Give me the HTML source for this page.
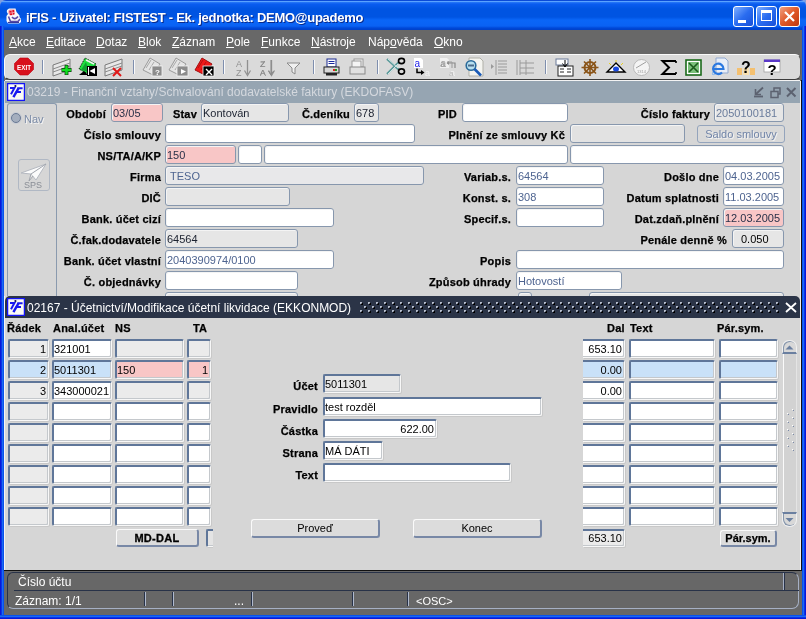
<!DOCTYPE html><html><head><meta charset="utf-8"><style>
*{margin:0;padding:0;box-sizing:border-box}
html,body{width:806px;height:619px;overflow:hidden;background:#7f9ee0}
body{position:relative;font-family:"Liberation Sans",sans-serif}
div{position:absolute}
div,svg{will-change:transform}
.lb{font:bold 11px "Liberation Sans",sans-serif;color:#000;white-space:nowrap;line-height:13px;letter-spacing:0.2px;-webkit-text-stroke:0.25px #000}
.tx{font:11px "Liberation Sans",sans-serif;color:#000;white-space:nowrap;line-height:13px}
.f1{border:1px solid #8797ad;border-radius:3px;font:11px "Liberation Sans",sans-serif;line-height:16px;padding-top:1px;white-space:nowrap;overflow:hidden;box-shadow:inset 1px 1px 0 #f4f4f4}
.f2{border-top:2px solid #5f7699;border-left:2px solid #5f7699;border-right:1px solid #f8f8f8;border-bottom:1px solid #f8f8f8;box-shadow:inset -1px -1px 0 #c4c8cc,1px 1px 0 #c8c8c8;border-radius:2px;font:11px "Liberation Sans",sans-serif;line-height:13px;padding-top:2px;white-space:nowrap;overflow:hidden}
.btn{border-top:1px solid #fafafa;border-left:1px solid #fafafa;border-right:2px solid #7888a6;border-bottom:2px solid #7888a6;border-radius:3px;background:#dcdcdc;font:11px "Liberation Sans",sans-serif;text-align:center;white-space:nowrap}
.menu{font:12px "Liberation Sans",sans-serif;color:#fff;white-space:nowrap;top:35px;line-height:14px}
.menu u{text-decoration:underline}
</style></head><body><div class="" style="left:0px;top:0px;width:806px;height:30px;background:linear-gradient(#0a4ad8 0px,#0a4ad8 1px,#5aa2ff 1px,#5aa2ff 2px,#2a7af8 2px,#0a5cf0 4px,#0054e2 9px,#0054e2 17px,#0a66f8 20px,#0a62f4 26px,#0048d8 28px,#0040c8 30px);border-radius:6px 6px 0 0"></div><svg style="position:absolute;left:0;top:0" width="30" height="30"><path d="M7 10 L9 8.5 H15.5 L16.5 12 L19.5 15.5 V17 L21 19 V22 L19 23.5 H8 L6.5 21 V16 L8 14 L6.8 12 Z" fill="#fafafa"/><path d="M8.5 10.5 L10 9.5 H14.5 L15 12 L13.5 15 L10 15.5 L8.5 13.5Z" fill="#f08a9a"/><path d="M9.5 11 h2 v1.5 h-2z M12.5 10 h1.5 v2 h-1.5z M10 13.5 h2 v1.5 h-2z M13 13 h1.5 v1.5 h-1.5z" fill="#e01020"/><path d="M8.5 16.5 L10.5 21.5 H18 L20 19 M12 17 Q15 20.5 18 16.5" stroke="#5a4aa8" stroke-width="1.6" fill="none"/><path d="M8 22.5 H19" stroke="#3a3a98" stroke-width="1.2"/></svg><div style="left:26px;top:10px;font:bold 13px 'Liberation Sans',sans-serif;letter-spacing:-0.27px;color:#fff;white-space:nowrap;line-height:16px;text-shadow:1px 1px 0 #0a2a8a">iFIS - Uživatel: FISTEST - Ek. jednotka: DEMO@upademo</div><div style="left:733px;top:6px;width:21px;height:21px;border:1px solid #fff;border-radius:3px;background:linear-gradient(135deg,#80b0ff,#2a6cf0 50%,#1850d8)"></div><div style="left:738px;top:20px;width:8px;height:3px;background:#fff"></div><div style="left:756px;top:6px;width:21px;height:21px;border:1px solid #fff;border-radius:3px;background:linear-gradient(135deg,#80b0ff,#2a6cf0 50%,#1850d8)"></div><div style="left:761px;top:10px;width:11px;height:11px;border:1px solid #fff;border-top-width:3px"></div><div style="left:779px;top:6px;width:21px;height:21px;border:1px solid #fff;border-radius:3px;background:linear-gradient(135deg,#f0a080,#e05828 50%,#c03810)"></div><svg style="position:absolute;left:779px;top:6px" width="21" height="21"><path d="M6 6 L15 15 M15 6 L6 15" stroke="#fff" stroke-width="2.2"/></svg><div style="left:0;top:26px;width:4px;height:593px;background:linear-gradient(90deg,#0818d8 0px,#0818d8 1px,#0a34e8 1px,#0a34e8 2px,#1a6af2 2px,#1a6af2 3px,#0a52ec 3px)"></div><div style="left:802px;top:26px;width:4px;height:593px;background:linear-gradient(90deg,#0a52ec 0px,#0a52ec 1px,#1a6af2 1px,#1a6af2 2px,#0a34e8 2px,#0a34e8 3px,#0818d8 3px)"></div><div style="left:0;top:615px;width:806px;height:4px;background:linear-gradient(#0a52ec 0px,#0a52ec 1px,#1a6af2 1px,#1a6af2 2px,#0a34e8 2px,#0a34e8 3px,#0818d8 3px)"></div><div class="" style="left:4px;top:30px;width:798px;height:24px;background:#686868"></div><div class="menu" style="left:9px"><u>A</u>kce</div><div class="menu" style="left:46px"><u>E</u>ditace</div><div class="menu" style="left:96px"><u>D</u>otaz</div><div class="menu" style="left:138px"><u>B</u>lok</div><div class="menu" style="left:172px"><u>Z</u>áznam</div><div class="menu" style="left:226px"><u>P</u>ole</div><div class="menu" style="left:261px"><u>F</u>unkce</div><div class="menu" style="left:311px"><u>N</u>ástroje</div><div class="menu" style="left:368px">Náp<u>o</u>věda</div><div class="menu" style="left:434px"><u>O</u>kno</div><div class="" style="left:4px;top:54px;width:798px;height:27px;background:#686868"></div><div class="" style="left:4px;top:54px;width:797px;height:26px;background:#dadada;border-radius:6px;border-top:1px solid #fafafa;border-left:1px solid #fafafa;border-bottom:1px solid #3c3c3c;border-right:1px solid #5a5a5a"></div><svg style="position:absolute;left:0;top:0" width="806" height="82"><rect x="42" y="60" width="1" height="14" fill="#7f8fae"/><rect x="43" y="60" width="1" height="14" fill="#fafafa"/><rect x="133" y="60" width="1" height="14" fill="#7f8fae"/><rect x="134" y="60" width="1" height="14" fill="#fafafa"/><rect x="223" y="60" width="1" height="14" fill="#7f8fae"/><rect x="224" y="60" width="1" height="14" fill="#fafafa"/><rect x="313" y="60" width="1" height="14" fill="#7f8fae"/><rect x="314" y="60" width="1" height="14" fill="#fafafa"/><rect x="377" y="60" width="1" height="14" fill="#7f8fae"/><rect x="378" y="60" width="1" height="14" fill="#fafafa"/><rect x="545" y="60" width="1" height="14" fill="#7f8fae"/><rect x="546" y="60" width="1" height="14" fill="#fafafa"/><path d="M20 58 H28 L33.5 63.5 V69.5 L28 75 H20 L14.5 69.5 V63.5 Z" fill="#d8101c" stroke="#c00010" stroke-width="0.6"/><text x="24" y="69.6" font-family="Liberation Sans" font-weight="bold" font-size="7" fill="#fff" text-anchor="middle" textLength="14" lengthAdjust="spacingAndGlyphs">EXIT</text><path d="M53 65 L70 59 V70 L53 76 Z" fill="#e8e8e8" stroke="#7a7a7a" stroke-width="1"/><path d="M53 69 L70 63 M53 72 L70 66" stroke="#8a8a8a" stroke-width="1"/><path d="M61.5 70 H71.5 M66.5 65 V75" stroke="#0a3a0a" stroke-width="3.8"/><path d="M62 70 H71 M66.5 65.5 V74.5" stroke="#10e020" stroke-width="2.4"/><path d="M79 69 L85 58 L96 64 L90 75 Z" fill="#20e040" stroke="#0a2a0a" stroke-width="1" stroke-dasharray="1.2 0.8"/><path d="M81 70 L86 62 L89 72Z" fill="#10a030"/><path d="M86 60 L94 64" stroke="#f4f4f4" stroke-width="1.5"/><path d="M79 75 H88 L84 71Z" fill="#000"/><rect x="87" y="66" width="10" height="10" fill="#000"/><rect x="88" y="67" width="1" height="8" fill="#fff"/><path d="M95 68 L89.5 71 L95 74Z" fill="#fff"/><path d="M105 65 L122 59 V70 L105 76 Z" fill="#e8e8e8" stroke="#7a7a7a" stroke-width="1"/><path d="M105 69 L122 63 M105 72 L122 66" stroke="#8a8a8a" stroke-width="1"/><path d="M113 68 L121 76 M121 68 L113 76" stroke="#e01818" stroke-width="2"/><path d="M143 70 L150 58 L160 64 L153 75 Z" fill="#e4e4e4" stroke="#9a9a9a"/><path d="M146 68 L151 60 M149 70 L154 62" stroke="#9a9a9a" stroke-width="0.8"/><rect x="152" y="66" width="10" height="10" fill="#8c8c8c" stroke="#f4f4f4" stroke-width="0.8"/><text x="157.5" y="75" font-family="Liberation Sans" font-weight="bold" font-size="8" fill="#fff" text-anchor="middle">?</text><path d="M169 70 L176 58 L186 64 L179 75 Z" fill="#e4e4e4" stroke="#9a9a9a"/><path d="M172 68 L177 60 M175 70 L180 62" stroke="#9a9a9a" stroke-width="0.8"/><rect x="177" y="66" width="11" height="10" fill="#8c8c8c" stroke="#f4f4f4" stroke-width="0.8"/><path d="M181 69 L186 71.5 L181 74Z" fill="#fff"/><path d="M195 70 L202 58 L212 64 L205 75 Z" fill="#f01818" stroke="#a01010"/><path d="M198 68 L203 60 M201 70 L206 62" stroke="#a01010" stroke-width="0.8"/><rect x="203" y="66" width="11" height="10" fill="#000" stroke="#f4f4f4" stroke-width="0.8"/><path d="M206 69 L212 75 M212 69 L206 75" stroke="#fff" stroke-width="1.4"/><text x="236" y="66.5" font-family="Liberation Sans" font-size="9" fill="#909090">A</text><text x="236" y="75.5" font-family="Liberation Sans" font-size="9" fill="#909090">Z</text><path d="M247.5 60 V74" stroke="#909090" stroke-width="1.3"/><path d="M244.5 70.5 L247.5 75.5 L250.5 70.5" stroke="#909090" fill="none" stroke-width="1.2"/><text x="260" y="66.5" font-family="Liberation Sans" font-size="9" fill="#909090">Z</text><text x="260" y="75.5" font-family="Liberation Sans" font-size="9" fill="#909090">A</text><path d="M271.5 60 V74" stroke="#909090" stroke-width="1.3"/><path d="M268.5 70.5 L271.5 75.5 L274.5 70.5" stroke="#909090" fill="none" stroke-width="1.2"/><text x="260" y="67" font-family="Liberation Sans" font-size="8" fill="#8a8a8a">Z</text><text x="260" y="75" font-family="Liberation Sans" font-size="8" fill="#8a8a8a">A</text><path d="M271 60 V74 M268.5 71 L271 75 L273.5 71" stroke="#8a8a8a" fill="none"/><path d="M287 63 H300 L295 68 V74 L292 72 V68 Z" fill="#f0f0f0" stroke="#8a8a8a"/><rect x="327" y="59" width="9" height="8" fill="#fff" stroke="#1a2a90"/><path d="M328.5 61.5 H334.5 M328.5 63.5 H334.5" stroke="#1a2aa0"/><rect x="324" y="67" width="15" height="6" fill="#d8d8d8" stroke="#222"/><rect x="326" y="73" width="11" height="2.5" fill="#222"/><rect x="333" y="69" width="2" height="2" fill="#e02020"/><rect x="335" y="69" width="2" height="2" fill="#20a020"/><rect x="354" y="59" width="9" height="8" fill="#f4f4f4" stroke="#9a9a9a"/><rect x="352" y="61" width="9" height="8" fill="#f4f4f4" stroke="#9a9a9a"/><rect x="350" y="67" width="15" height="7" fill="#e0e0e0" stroke="#8a8a8a"/><path d="M387 59 L399 70 M387 74 L399 62" stroke="#5a9a9a" stroke-width="2.2"/><path d="M388 59 L398 68 M388 74 L398 64" stroke="#e8f4f4" stroke-width="0.8"/><ellipse cx="401.5" cy="61" rx="3" ry="2.6" fill="none" stroke="#000" stroke-width="1.6"/><ellipse cx="401.5" cy="71.5" rx="3" ry="2.6" fill="none" stroke="#000" stroke-width="1.6"/><path d="M414 58 H421 L423 60 V68 H414 Z" fill="#fff"/><text x="414.5" y="67" font-family="Liberation Sans" font-size="10" fill="#1a1ae8">a</text><path d="M417 68.5 V72.5 H422" stroke="#000" fill="none" stroke-width="1.5"/><path d="M421 70 L424.5 72.5 L421 75Z" fill="#000"/><text x="425" y="76" font-family="Liberation Sans" font-size="9" fill="#f4f4f4">a</text><path d="M440 58 H447 L449 60 V68 H440 Z" fill="#f0f0f0"/><text x="440.5" y="67" font-family="Liberation Sans" font-size="10" fill="#a0a0a0">a</text><path d="M447 63 H455 V68" stroke="#8a8a8a" fill="none" stroke-width="1.2"/><path d="M449 61 L446.5 63 L449 65Z" fill="#8a8a8a"/><text x="450" y="76" font-family="Liberation Sans" font-size="9" fill="#f4f4f4">a</text><text x="440" y="67" font-family="Liberation Sans" font-size="9" fill="#9a9a9a">a</text><path d="M447 62 H452 V68" stroke="#9a9a9a" fill="none"/><text x="449" y="76" font-family="Liberation Sans" font-size="8" fill="#b8b8b8">a</text><path d="M469 58 H480 L483 61 V76 H469 Z" fill="#f4f4f0" stroke="#b0b0a8"/><circle cx="471" cy="65.5" r="4.8" fill="#b8e0f0" stroke="#2a6a9a" stroke-width="1.6"/><rect x="468" y="64.5" width="6" height="2" fill="#4a6a8a"/><path d="M474.5 69 L481 75.5" stroke="#1a5ab8" stroke-width="2.6"/><path d="M491 64 L494 66.5 L491 69Z" fill="#9a9a9a"/><path d="M496 60 V75 M498 61 H507 M498 64 H507 M498 67 H507 M498 70 H507 M498 73 H507" stroke="#9a9a9a"/><path d="M517 60 V75 M520 60 V75 M520 63 H534 M520 68 H534 M520 73 H534 M526 60 V75" stroke="#9a9a9a"/><rect x="556" y="59" width="12" height="6" fill="#fff" stroke="#6a7a9a"/><rect x="558" y="66" width="15" height="10" fill="#fff" stroke="#222"/><path d="M565 60 V66 M562.5 63.5 L565 67 L567.5 63.5" stroke="#000" fill="none"/><path d="M560 69 H564 M560 72 H564 M567 69 H571 M567 72 H571" stroke="#222"/><circle cx="590" cy="67.5" r="5.5" fill="none" stroke="#8a5418" stroke-width="2"/><path d="M590 59 V76 M581.5 67.5 H598.5 M584 61.5 L596 73.5 M596 61.5 L584 73.5" stroke="#8a5418" stroke-width="1.6"/><circle cx="590" cy="67.5" r="1.5" fill="#8a5418"/><path d="M607 72 L616 63 L625 72 Z" fill="#fff" stroke="#000" stroke-width="1.4"/><ellipse cx="616" cy="69" rx="3" ry="2.5" fill="#1a4ae0"/><path d="M609 63 L611 65 M623 63 L621 65 M616 60 V62" stroke="#e8d020" stroke-width="1"/><circle cx="641.5" cy="67.5" r="8" fill="#f4f4f4" stroke="#b8b8b8"/><path d="M636 68 L646 62" stroke="#a0a0a0"/><text x="641.5" y="73" font-family="Liberation Sans" font-size="4" fill="#a0a0a0" text-anchor="middle">1314</text><path d="M676 61 H662.5 L669 67.5 L662.5 74 H676" stroke="#000" stroke-width="2" fill="none"/><path d="M676 61 V63 M676 74 V72" stroke="#000" stroke-width="1.6"/><rect x="686" y="60" width="15" height="15" fill="#fff" stroke="#1a6a1a" stroke-width="1.6"/><rect x="688" y="62" width="11" height="11" fill="#7ac07a"/><path d="M689 63 L698 72 M698 63 L689 72" stroke="#1a5a1a" stroke-width="1.6"/><path d="M716 58 H725 L728 61 V73 H716 Z" fill="#e8eef8" stroke="#90a8d0"/><path d="M713.5 69 H723.5 A5.2 5.2 0 1 0 722 72.5" stroke="#2a78e0" stroke-width="2.2" fill="none"/><path d="M715 74 Q711 76 713 72" stroke="#7ab0f0" fill="none"/><rect x="737" y="68" width="5" height="7" fill="#f4c070"/><rect x="750" y="68" width="5" height="7" fill="#f4c070"/><rect x="743" y="68" width="6" height="7" fill="#f8e0b0"/><text x="746" y="72.5" font-family="Liberation Sans" font-weight="bold" font-size="16" fill="#000" text-anchor="middle">?</text><rect x="764" y="60" width="16" height="12" fill="#fff" stroke="#a0a0a0" stroke-width="0.8"/><rect x="764" y="59.5" width="16" height="2.5" fill="#5a38c8"/><text x="772" y="75" font-family="Liberation Sans" font-weight="bold" font-size="15" fill="#000" text-anchor="middle">?</text></svg><div class="" style="left:4px;top:81px;width:798px;height:215px;background:#d6d6d6"></div><div class="" style="left:5px;top:80px;width:795px;height:1px;background:#f4f4f4"></div><div class="" style="left:5px;top:81px;width:795px;height:22px;background:#96a5b2"></div><svg style="position:absolute;left:7px;top:83px" width="18" height="18" viewBox="0 0 18 18"><rect x="0.6" y="0.6" width="16.8" height="16.8" fill="#fbfbf4" stroke="#1414f8" stroke-width="1.3"/><circle cx="8.4" cy="3" r="1.1" fill="#0a0a5a"/><path d="M3 5 H7.4 L4 11.2" stroke="#1a1af0" stroke-width="2" fill="none" stroke-linejoin="miter"/><path d="M11.6 5.2 L6.4 14.2" stroke="#1a1af0" stroke-width="2.4" fill="none"/><path d="M10.4 5.3 H15.6 M8.6 9 H14" stroke="#1a1af0" stroke-width="2" fill="none"/></svg><div style="left:27px;top:85px;font:12px 'Liberation Sans',sans-serif;color:#d4d8de;white-space:nowrap;line-height:14px">03219 - Finanční vztahy/Schvalování dodavatelské faktury (EKDOFASV)</div><svg style="position:absolute;left:750px;top:84px" width="50" height="16"><path d="M4 12.5 H13" stroke="#5c6270" stroke-width="1.8"/><path d="M6 10 L13 3.5" stroke="#5c6270" stroke-width="1.8"/><path d="M5.5 5 V10.5 H11" stroke="#5c6270" stroke-width="1.6" fill="none"/><rect x="21" y="7.5" width="7" height="6" fill="none" stroke="#5c6270" stroke-width="1.5"/><path d="M24 7.5 V4 H30 V10 H28" stroke="#5c6270" stroke-width="1.5" fill="none"/><path d="M37 4 L45.5 12.5 M45.5 4 L37 12.5" stroke="#5c6270" stroke-width="2"/></svg><div style="left:7px;top:103px;width:50px;height:193px;border:1px solid #8a9aae;border-bottom:none;border-radius:3px 3px 0 0;background:#d6d6d6"></div><div style="left:11px;top:113px;width:10px;height:10px;border-radius:50%;border:1px solid #6a7a94;background:#a4aebe;box-shadow:0 0 0 1px #c8ccd4"></div><div class="tx" style="left:24px;top:113px;color:#7c8ca8;font-size:11px;text-shadow:1px 1px 0 #f4f4f4">Nav</div><div style="left:18px;top:159px;width:32px;height:32px;border:1px solid #b0b8c4;border-radius:3px"></div><svg style="position:absolute;left:19px;top:161px" width="30" height="22"><path d="M2 12 L27 3 L17 19 L12 13 Z" fill="#fbfbfb" stroke="#b4b8c0"/><path d="M12 13 L27 3 M12 13 L10 20 L14 15" stroke="#a0a4ac" fill="#e8e8e8"/></svg><div class="tx" style="left:24px;top:179px;color:#8a8e96;font-size:9px">SPS</div><div class="lb" style="left:-94px;top:108px;width:200px;text-align:right">Období</div><div class="f1" style="left:111px;top:103px;width:52px;height:19px;background:#f8c6c6;color:#283048;"><span style="padding-left:1px;">03/05</span></div><div class="lb" style="left:-3px;top:108px;width:200px;text-align:right">Stav</div><div class="f1" style="left:201px;top:103px;width:88px;height:19px;background:#e6e6e6;color:#1c2230;"><span style="padding-left:1px;">Kontován</span></div><div class="lb" style="left:150px;top:108px;width:200px;text-align:right">Č.deníku</div><div class="f1" style="left:354px;top:103px;width:25px;height:19px;background:#e6e6e6;color:#1c2230;"><span style="padding-left:1px;">678</span></div><div class="lb" style="left:257px;top:108px;width:200px;text-align:right">PID</div><div class="f1" style="left:462px;top:103px;width:106px;height:19px;background:#ffffff;color:#1c2330;"><span style="padding-left:1px;"></span></div><div class="lb" style="left:510px;top:108px;width:200px;text-align:right">Číslo faktury</div><div class="f1" style="left:714px;top:103px;width:70px;height:19px;background:#e6e6e6;color:#6a7c9c;"><span style="padding-left:1px;">2050100181</span></div><div class="lb" style="left:-39px;top:129px;width:200px;text-align:right">Číslo smlouvy</div><div class="f1" style="left:165px;top:124px;width:250px;height:19px;background:#ffffff;color:#1c2330;"><span style="padding-left:1px;"></span></div><div class="lb" style="left:365px;top:129px;width:200px;text-align:right">Plnění ze smlouvy Kč</div><div class="f1" style="left:570px;top:124px;width:115px;height:19px;background:#e2e2e2;color:#1c2330;"><span style="padding-left:1px;"></span></div><div class="btn" style="left:697px;top:125px;width:88px;height:18px;color:#7084a8;line-height:16px;background:#d9d9d9;border:1px solid #94a4bc;text-shadow:1px 1px 0 #f4f4f4">Saldo smlouvy</div><div class="lb" style="left:-39px;top:150px;width:200px;text-align:right">NS/TA/A/KP</div><div class="f1" style="left:165px;top:145px;width:71px;height:19px;background:#f8c6c6;color:#283048;"><span style="padding-left:1px;">150</span></div><div class="f1" style="left:238px;top:145px;width:24px;height:19px;background:#ffffff;color:#1c2330;"><span style="padding-left:1px;"></span></div><div class="f1" style="left:264px;top:145px;width:304px;height:19px;background:#ffffff;color:#1c2330;"><span style="padding-left:1px;"></span></div><div class="f1" style="left:570px;top:145px;width:214px;height:19px;background:#ffffff;color:#1c2330;"><span style="padding-left:1px;"></span></div><div class="lb" style="left:-39px;top:171px;width:200px;text-align:right">Firma</div><div class="f1" style="left:165px;top:166px;width:259px;height:19px;background:#e8e8ea;color:#4e6490;"><span style="padding-left:1px;padding-left:4px">TESO</span></div><div class="lb" style="left:311px;top:171px;width:200px;text-align:right">Variab.s.</div><div class="f1" style="left:516px;top:166px;width:88px;height:19px;background:#ffffff;color:#4e6490;"><span style="padding-left:1px;">64564</span></div><div class="lb" style="left:519px;top:171px;width:200px;text-align:right">Došlo dne</div><div class="f1" style="left:723px;top:166px;width:61px;height:19px;background:#ffffff;color:#4e6490;"><span style="padding-left:1px;">04.03.2005</span></div><div class="lb" style="left:-39px;top:192px;width:200px;text-align:right">DIČ</div><div class="f1" style="left:165px;top:187px;width:125px;height:19px;background:#e6e6e6;color:#1c2330;"><span style="padding-left:1px;"></span></div><div class="lb" style="left:311px;top:192px;width:200px;text-align:right">Konst. s.</div><div class="f1" style="left:516px;top:187px;width:88px;height:19px;background:#ffffff;color:#4e6490;"><span style="padding-left:1px;">308</span></div><div class="lb" style="left:519px;top:192px;width:200px;text-align:right">Datum splatnosti</div><div class="f1" style="left:723px;top:187px;width:61px;height:19px;background:#ffffff;color:#4e6490;"><span style="padding-left:1px;">11.03.2005</span></div><div class="lb" style="left:-39px;top:213px;width:200px;text-align:right">Bank. účet cizí</div><div class="f1" style="left:165px;top:208px;width:169px;height:19px;background:#ffffff;color:#1c2330;"><span style="padding-left:1px;"></span></div><div class="lb" style="left:311px;top:213px;width:200px;text-align:right">Specif.s.</div><div class="f1" style="left:516px;top:208px;width:88px;height:19px;background:#ffffff;color:#1c2330;"><span style="padding-left:1px;"></span></div><div class="lb" style="left:519px;top:213px;width:200px;text-align:right">Dat.zdaň.plnění</div><div class="f1" style="left:723px;top:208px;width:61px;height:19px;background:#f8c6c6;color:#283048;"><span style="padding-left:1px;">12.03.2005</span></div><div class="lb" style="left:-39px;top:234px;width:200px;text-align:right">Č.fak.dodavatele</div><div class="f1" style="left:165px;top:229px;width:133px;height:19px;background:#e6e6e6;color:#1c2230;"><span style="padding-left:1px;">64564</span></div><div class="lb" style="left:527px;top:234px;width:200px;text-align:right">Penále denně %</div><div class="f1" style="left:732px;top:229px;width:52px;height:19px;background:#e6e6e6;color:#000;"><span style="padding-left:1px;padding-left:8px">0.050</span></div><div class="lb" style="left:-39px;top:255px;width:200px;text-align:right">Bank. účet vlastní</div><div class="f1" style="left:165px;top:250px;width:169px;height:19px;background:#ffffff;color:#4e6490;"><span style="padding-left:1px;">2040390974/0100</span></div><div class="lb" style="left:311px;top:255px;width:200px;text-align:right">Popis</div><div class="f1" style="left:516px;top:250px;width:268px;height:19px;background:#ffffff;color:#1c2330;"><span style="padding-left:1px;"></span></div><div class="lb" style="left:-39px;top:276px;width:200px;text-align:right">Č. objednávky</div><div class="f1" style="left:165px;top:271px;width:133px;height:19px;background:#ffffff;color:#1c2330;"><span style="padding-left:1px;"></span></div><div class="lb" style="left:311px;top:276px;width:200px;text-align:right">Způsob úhrady</div><div class="f1" style="left:516px;top:271px;width:106px;height:19px;background:#ffffff;color:#4e6490;"><span style="padding-left:1px;">Hotovostí</span></div><div class="f1" style="left:165px;top:292px;width:133px;height:19px;background:#e6e6e6;color:#1c2330;"><span style="padding-left:1px;"></span></div><div class="f1" style="left:518px;top:292px;width:14px;height:19px;background:#e6e6e6;color:#1c2330;"><span style="padding-left:1px;"></span></div><div class="f1" style="left:589px;top:292px;width:195px;height:19px;background:#e6e6e6;color:#1c2330;"><span style="padding-left:1px;"></span></div><div class="" style="left:4px;top:296px;width:798px;height:275px;background:#d6d6d6;border-left:1px solid #f0f0f0"></div><div class="" style="left:5px;top:296px;width:795px;height:22px;background:#2b3447;border-radius:5px 5px 0 0"></div><svg style="position:absolute;left:360px;top:302px" width="420" height="11"><defs><pattern id="dp" x="0" y="0" width="8" height="8" patternUnits="userSpaceOnUse"><rect x="0" y="0" width="2" height="2" fill="#b8bfcc"/><rect x="1" y="1" width="2" height="2" fill="#000"/><rect x="1" y="1" width="1" height="1" fill="#6a7080"/><rect x="4" y="4" width="2" height="2" fill="#b8bfcc"/><rect x="5" y="5" width="2" height="2" fill="#000"/><rect x="5" y="5" width="1" height="1" fill="#6a7080"/></pattern></defs><rect x="0" y="0" width="420" height="11" fill="url(#dp)"/></svg><svg style="position:absolute;left:7px;top:298px" width="18" height="18" viewBox="0 0 18 18"><rect x="0.6" y="0.6" width="16.8" height="16.8" fill="#fbfbf4" stroke="#1414f8" stroke-width="1.3"/><circle cx="8.4" cy="3" r="1.1" fill="#0a0a5a"/><path d="M3 5 H7.4 L4 11.2" stroke="#1a1af0" stroke-width="2" fill="none" stroke-linejoin="miter"/><path d="M11.6 5.2 L6.4 14.2" stroke="#1a1af0" stroke-width="2.4" fill="none"/><path d="M10.4 5.3 H15.6 M8.6 9 H14" stroke="#1a1af0" stroke-width="2" fill="none"/></svg><div style="left:27px;top:301px;font:12px 'Liberation Sans',sans-serif;color:#fff;white-space:nowrap;line-height:14px">02167 - Účetnictví/Modifikace účetní likvidace (EKKONMOD)</div><svg style="position:absolute;left:785px;top:302px" width="12" height="11"><path d="M1 1 L11 10 M11 1 L1 10" stroke="#fff" stroke-width="1.8"/></svg><div class="lb" style="left:7px;top:322px;">Řádek</div><div class="lb" style="left:53px;top:322px;">Anal.účet</div><div class="lb" style="left:115px;top:322px;">NS</div><div class="lb" style="left:193px;top:322px;">TA</div><div class="lb" style="left:607px;top:322px;">Dal</div><div class="lb" style="left:630px;top:322px;">Text</div><div class="lb" style="left:717px;top:322px;">Pár.sym.</div><div class="f2" style="left:8px;top:339px;width:41px;height:19px;background:#ebebeb;color:#000;text-align:right;"><span style="padding-right:2px;">1</span></div><div class="f2" style="left:52px;top:339px;width:60px;height:19px;background:#fff;color:#000;"><span style="padding-left:0px;">321001</span></div><div class="f2" style="left:115px;top:339px;width:69px;height:19px;background:#ebebeb;color:#000;"><span style="padding-left:0px;"></span></div><div class="f2" style="left:187px;top:339px;width:24px;height:19px;background:#ebebeb;color:#000;"><span style="padding-left:0px;"></span></div><div class="f2" style="left:583px;top:339px;width:42px;height:19px;background:#fff;color:#000;text-align:right;border-left:none;border-top-left-radius:0;border-bottom-left-radius:0;"><span style="padding-right:2px;">653.10</span></div><div class="f2" style="left:629px;top:339px;width:86px;height:19px;background:#fff;color:#000;"><span style="padding-left:0px;"></span></div><div class="f2" style="left:719px;top:339px;width:59px;height:19px;background:#fff;color:#000;"><span style="padding-left:0px;"></span></div><div class="f2" style="left:8px;top:360px;width:41px;height:19px;background:#c9e1f8;color:#000;text-align:right;"><span style="padding-right:2px;">2</span></div><div class="f2" style="left:52px;top:360px;width:60px;height:19px;background:#c9e1f8;color:#000;"><span style="padding-left:0px;">5011301</span></div><div class="f2" style="left:115px;top:360px;width:69px;height:19px;background:#f8c6c6;color:#000;"><span style="padding-left:0px;">150</span></div><div class="f2" style="left:187px;top:360px;width:24px;height:19px;background:#f8c6c6;color:#000;text-align:right;"><span style="padding-right:2px;">1</span></div><div class="f2" style="left:583px;top:360px;width:42px;height:19px;background:#c9e1f8;color:#000;text-align:right;border-left:none;border-top-left-radius:0;border-bottom-left-radius:0;"><span style="padding-right:2px;">0.00</span></div><div class="f2" style="left:629px;top:360px;width:86px;height:19px;background:#c9e1f8;color:#000;"><span style="padding-left:0px;"></span></div><div class="f2" style="left:719px;top:360px;width:59px;height:19px;background:#c9e1f8;color:#000;"><span style="padding-left:0px;"></span></div><div class="f2" style="left:8px;top:381px;width:41px;height:19px;background:#ebebeb;color:#000;text-align:right;"><span style="padding-right:2px;">3</span></div><div class="f2" style="left:52px;top:381px;width:60px;height:19px;background:#fff;color:#000;"><span style="padding-left:0px;">343000021</span></div><div class="f2" style="left:115px;top:381px;width:69px;height:19px;background:#ebebeb;color:#000;"><span style="padding-left:0px;"></span></div><div class="f2" style="left:187px;top:381px;width:24px;height:19px;background:#ebebeb;color:#000;"><span style="padding-left:0px;"></span></div><div class="f2" style="left:583px;top:381px;width:42px;height:19px;background:#fff;color:#000;text-align:right;border-left:none;border-top-left-radius:0;border-bottom-left-radius:0;"><span style="padding-right:2px;">0.00</span></div><div class="f2" style="left:629px;top:381px;width:86px;height:19px;background:#fff;color:#000;"><span style="padding-left:0px;"></span></div><div class="f2" style="left:719px;top:381px;width:59px;height:19px;background:#fff;color:#000;"><span style="padding-left:0px;"></span></div><div class="f2" style="left:8px;top:402px;width:41px;height:19px;background:#ebebeb;color:#000;"><span style="padding-left:0px;"></span></div><div class="f2" style="left:52px;top:402px;width:60px;height:19px;background:#fff;color:#000;"><span style="padding-left:0px;"></span></div><div class="f2" style="left:115px;top:402px;width:69px;height:19px;background:#fff;color:#000;"><span style="padding-left:0px;"></span></div><div class="f2" style="left:187px;top:402px;width:24px;height:19px;background:#fff;color:#000;"><span style="padding-left:0px;"></span></div><div class="f2" style="left:583px;top:402px;width:42px;height:19px;background:#fff;color:#000;border-left:none;border-top-left-radius:0;border-bottom-left-radius:0;"><span style="padding-left:0px;"></span></div><div class="f2" style="left:629px;top:402px;width:86px;height:19px;background:#fff;color:#000;"><span style="padding-left:0px;"></span></div><div class="f2" style="left:719px;top:402px;width:59px;height:19px;background:#fff;color:#000;"><span style="padding-left:0px;"></span></div><div class="f2" style="left:8px;top:423px;width:41px;height:19px;background:#ebebeb;color:#000;"><span style="padding-left:0px;"></span></div><div class="f2" style="left:52px;top:423px;width:60px;height:19px;background:#fff;color:#000;"><span style="padding-left:0px;"></span></div><div class="f2" style="left:115px;top:423px;width:69px;height:19px;background:#fff;color:#000;"><span style="padding-left:0px;"></span></div><div class="f2" style="left:187px;top:423px;width:24px;height:19px;background:#fff;color:#000;"><span style="padding-left:0px;"></span></div><div class="f2" style="left:583px;top:423px;width:42px;height:19px;background:#fff;color:#000;border-left:none;border-top-left-radius:0;border-bottom-left-radius:0;"><span style="padding-left:0px;"></span></div><div class="f2" style="left:629px;top:423px;width:86px;height:19px;background:#fff;color:#000;"><span style="padding-left:0px;"></span></div><div class="f2" style="left:719px;top:423px;width:59px;height:19px;background:#fff;color:#000;"><span style="padding-left:0px;"></span></div><div class="f2" style="left:8px;top:444px;width:41px;height:19px;background:#ebebeb;color:#000;"><span style="padding-left:0px;"></span></div><div class="f2" style="left:52px;top:444px;width:60px;height:19px;background:#fff;color:#000;"><span style="padding-left:0px;"></span></div><div class="f2" style="left:115px;top:444px;width:69px;height:19px;background:#fff;color:#000;"><span style="padding-left:0px;"></span></div><div class="f2" style="left:187px;top:444px;width:24px;height:19px;background:#fff;color:#000;"><span style="padding-left:0px;"></span></div><div class="f2" style="left:583px;top:444px;width:42px;height:19px;background:#fff;color:#000;border-left:none;border-top-left-radius:0;border-bottom-left-radius:0;"><span style="padding-left:0px;"></span></div><div class="f2" style="left:629px;top:444px;width:86px;height:19px;background:#fff;color:#000;"><span style="padding-left:0px;"></span></div><div class="f2" style="left:719px;top:444px;width:59px;height:19px;background:#fff;color:#000;"><span style="padding-left:0px;"></span></div><div class="f2" style="left:8px;top:465px;width:41px;height:19px;background:#ebebeb;color:#000;"><span style="padding-left:0px;"></span></div><div class="f2" style="left:52px;top:465px;width:60px;height:19px;background:#fff;color:#000;"><span style="padding-left:0px;"></span></div><div class="f2" style="left:115px;top:465px;width:69px;height:19px;background:#fff;color:#000;"><span style="padding-left:0px;"></span></div><div class="f2" style="left:187px;top:465px;width:24px;height:19px;background:#fff;color:#000;"><span style="padding-left:0px;"></span></div><div class="f2" style="left:583px;top:465px;width:42px;height:19px;background:#fff;color:#000;border-left:none;border-top-left-radius:0;border-bottom-left-radius:0;"><span style="padding-left:0px;"></span></div><div class="f2" style="left:629px;top:465px;width:86px;height:19px;background:#fff;color:#000;"><span style="padding-left:0px;"></span></div><div class="f2" style="left:719px;top:465px;width:59px;height:19px;background:#fff;color:#000;"><span style="padding-left:0px;"></span></div><div class="f2" style="left:8px;top:486px;width:41px;height:19px;background:#ebebeb;color:#000;"><span style="padding-left:0px;"></span></div><div class="f2" style="left:52px;top:486px;width:60px;height:19px;background:#fff;color:#000;"><span style="padding-left:0px;"></span></div><div class="f2" style="left:115px;top:486px;width:69px;height:19px;background:#fff;color:#000;"><span style="padding-left:0px;"></span></div><div class="f2" style="left:187px;top:486px;width:24px;height:19px;background:#fff;color:#000;"><span style="padding-left:0px;"></span></div><div class="f2" style="left:583px;top:486px;width:42px;height:19px;background:#fff;color:#000;border-left:none;border-top-left-radius:0;border-bottom-left-radius:0;"><span style="padding-left:0px;"></span></div><div class="f2" style="left:629px;top:486px;width:86px;height:19px;background:#fff;color:#000;"><span style="padding-left:0px;"></span></div><div class="f2" style="left:719px;top:486px;width:59px;height:19px;background:#fff;color:#000;"><span style="padding-left:0px;"></span></div><div class="f2" style="left:8px;top:507px;width:41px;height:19px;background:#ebebeb;color:#000;"><span style="padding-left:0px;"></span></div><div class="f2" style="left:52px;top:507px;width:60px;height:19px;background:#fff;color:#000;"><span style="padding-left:0px;"></span></div><div class="f2" style="left:115px;top:507px;width:69px;height:19px;background:#fff;color:#000;"><span style="padding-left:0px;"></span></div><div class="f2" style="left:187px;top:507px;width:24px;height:19px;background:#fff;color:#000;"><span style="padding-left:0px;"></span></div><div class="f2" style="left:583px;top:507px;width:42px;height:19px;background:#fff;color:#000;border-left:none;border-top-left-radius:0;border-bottom-left-radius:0;"><span style="padding-left:0px;"></span></div><div class="f2" style="left:629px;top:507px;width:86px;height:19px;background:#fff;color:#000;"><span style="padding-left:0px;"></span></div><div class="f2" style="left:719px;top:507px;width:59px;height:19px;background:#fff;color:#000;"><span style="padding-left:0px;"></span></div><div class="btn" style="left:116px;top:529px;width:83px;height:18px;font-weight:bold;line-height:16px;letter-spacing:0.3px;-webkit-text-stroke:0.3px #000">MD-DAL</div><div class="f2" style="left:206px;top:529px;width:14px;height:18px;background:#e4e4e4;color:#000;"><span style="padding-left:0px;"></span></div><div class="f2" style="left:583px;top:529px;width:42px;height:18px;background:#ebebeb;color:#000;text-align:right;border-left:none;border-top-left-radius:0;border-bottom-left-radius:0;padding-top:1px"><span style="padding-right:2px;">653.10</span></div><div class="btn" style="left:720px;top:530px;width:57px;height:17px;font-weight:bold;line-height:15px;-webkit-text-stroke:0.25px #000">Pár.sym.</div><div class="" style="left:213px;top:336px;width:367px;height:230px;background:#d6d6d6"></div><div class="lb" style="left:118px;top:380px;width:200px;text-align:right">Účet</div><div class="f2" style="left:323px;top:374px;width:78px;height:19px;background:#e6e6e6;color:#000;padding-top:2px"><span style="padding-left:0px;">5011301</span></div><div class="lb" style="left:118px;top:403px;width:200px;text-align:right">Pravidlo</div><div class="f2" style="left:323px;top:397px;width:219px;height:19px;background:#fff;color:#000;padding-top:2px"><span style="padding-left:0px;">test rozděl</span></div><div class="lb" style="left:118px;top:425px;width:200px;text-align:right">Částka</div><div class="f2" style="left:323px;top:419px;width:114px;height:19px;background:#fff;color:#000;text-align:right;padding-top:2px"><span style="padding-right:2px;">622.00</span></div><div class="lb" style="left:118px;top:447px;width:200px;text-align:right">Strana</div><div class="f2" style="left:323px;top:441px;width:60px;height:19px;background:#fff;color:#000;padding-top:2px"><span style="padding-left:0px;">MÁ DÁTI</span></div><div class="lb" style="left:118px;top:469px;width:200px;text-align:right">Text</div><div class="f2" style="left:323px;top:463px;width:188px;height:19px;background:#fff;color:#000;padding-top:2px"><span style="padding-left:0px;"></span></div><div class="btn" style="left:251px;top:519px;width:129px;height:19px;line-height:17px">Proveď</div><div class="btn" style="left:413px;top:519px;width:129px;height:19px;line-height:17px">Konec</div><div style="left:783px;top:350px;width:14px;height:166px;background:#d2d2d2;border-left:1px solid #fafafa;border-right:1px solid #e4e4e4"></div><div style="left:782px;top:340px;width:15px;height:14px;border:1px solid #f0f0f0;border-bottom:2px solid #6a7fa0;border-radius:7px 7px 0 0;background:#d8d8d8;box-shadow:inset 1px 1px 0 #8797ad"></div><svg style="position:absolute;left:783px;top:342px" width="13" height="10"><path d="M2.5 7.5 L6.5 3.5 L10.5 7.5Z" fill="#6a7fa0"/></svg><div style="left:782px;top:512px;width:15px;height:15px;border:1px solid #f0f0f0;border-top:2px solid #6a7fa0;border-radius:0 0 7px 7px;background:#d8d8d8;box-shadow:inset 1px -1px 0 #8797ad"></div><svg style="position:absolute;left:783px;top:515px" width="13" height="10"><path d="M2.5 3 L6.5 7 L10.5 3Z" fill="#6a7fa0"/></svg><svg style="position:absolute;left:784px;top:405px" width="12" height="50"><rect x="3" y="8" width="1" height="1" fill="#fff"/><rect x="4" y="9" width="1" height="1" fill="#7a8aa8"/><rect x="3" y="16" width="1" height="1" fill="#fff"/><rect x="4" y="17" width="1" height="1" fill="#7a8aa8"/><rect x="3" y="24" width="1" height="1" fill="#fff"/><rect x="4" y="25" width="1" height="1" fill="#7a8aa8"/><rect x="3" y="32" width="1" height="1" fill="#fff"/><rect x="4" y="33" width="1" height="1" fill="#7a8aa8"/><rect x="3" y="40" width="1" height="1" fill="#fff"/><rect x="4" y="41" width="1" height="1" fill="#7a8aa8"/><rect x="8" y="4" width="1" height="1" fill="#fff"/><rect x="9" y="5" width="1" height="1" fill="#7a8aa8"/><rect x="8" y="12" width="1" height="1" fill="#fff"/><rect x="9" y="13" width="1" height="1" fill="#7a8aa8"/><rect x="8" y="20" width="1" height="1" fill="#fff"/><rect x="9" y="21" width="1" height="1" fill="#7a8aa8"/><rect x="8" y="28" width="1" height="1" fill="#fff"/><rect x="9" y="29" width="1" height="1" fill="#7a8aa8"/><rect x="8" y="36" width="1" height="1" fill="#fff"/><rect x="9" y="37" width="1" height="1" fill="#7a8aa8"/><rect x="8" y="44" width="1" height="1" fill="#fff"/><rect x="9" y="45" width="1" height="1" fill="#7a8aa8"/></svg><div style="left:801px;top:80px;width:1px;height:491px;background:#101010"></div><div style="left:800px;top:81px;width:1px;height:489px;background:#f0f0f0"></div><div class="" style="left:4px;top:570px;width:798px;height:45px;background:#676767;border-top:1px solid #101010"></div><div style="left:4px;top:296px;width:1px;height:274px;background:#f4f4f4"></div><div style="left:7px;top:572px;width:792px;height:37px;border:1px solid #a6b0c4;border-left-color:#283248;border-top-color:#283248;border-radius:6px 7px 7px 6px"></div><div style="left:14px;top:590px;width:785px;height:1px;background:#283248"></div><div style="left:784px;top:573px;width:1px;height:17px;background:#283248"></div><div style="left:783px;top:573px;width:1px;height:17px;background:#a6b0c4"></div><div style="left:144px;top:592px;width:1px;height:14px;background:#283248"></div><div style="left:145px;top:592px;width:1px;height:14px;background:#b0bace"></div><div style="left:172px;top:592px;width:1px;height:14px;background:#283248"></div><div style="left:173px;top:592px;width:1px;height:14px;background:#b0bace"></div><div style="left:251px;top:592px;width:1px;height:14px;background:#283248"></div><div style="left:252px;top:592px;width:1px;height:14px;background:#b0bace"></div><div style="left:352px;top:592px;width:1px;height:14px;background:#283248"></div><div style="left:353px;top:592px;width:1px;height:14px;background:#b0bace"></div><div style="left:407px;top:592px;width:1px;height:14px;background:#283248"></div><div style="left:408px;top:592px;width:1px;height:14px;background:#b0bace"></div><div class="tx" style="left:18px;top:575px;color:#fff;font-size:12px;line-height:14px">Číslo účtu</div><div class="tx" style="left:15px;top:594px;color:#fff;font-size:12px;line-height:14px">Záznam: 1/1</div><div class="tx" style="left:234px;top:594px;color:#fff;font-size:12px;line-height:14px">...</div><div class="tx" style="left:416px;top:594px;color:#fff;font-size:11px;line-height:14px">&lt;OSC&gt;</div></body></html>
